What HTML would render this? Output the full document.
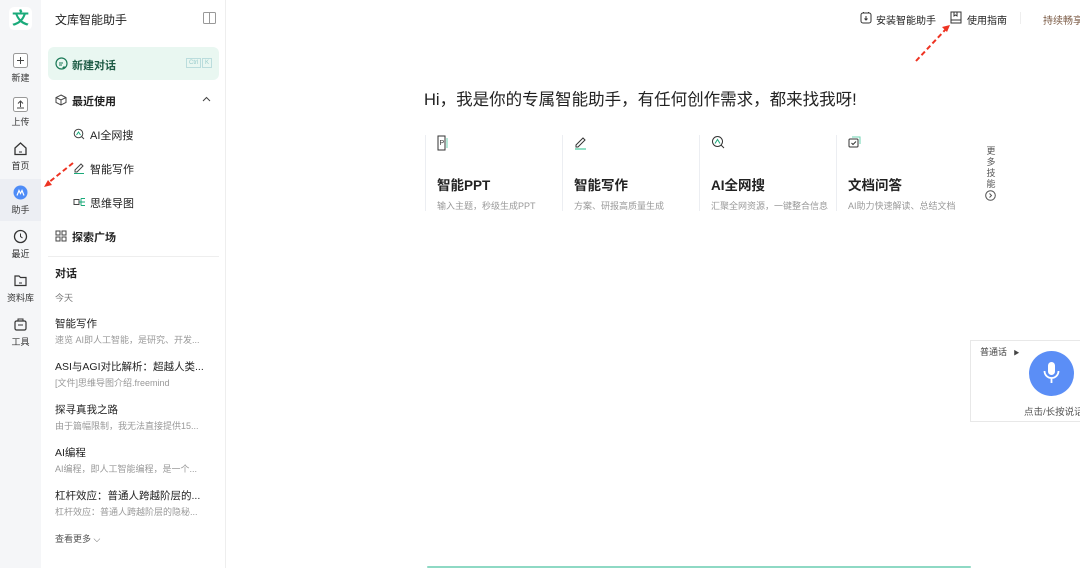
<!DOCTYPE html>
<html><head><meta charset="utf-8"><style>
*{margin:0;padding:0;box-sizing:border-box}
body{width:1080px;height:568px;overflow:hidden;background:#fff;font-family:"Liberation Sans","Noto Sans CJK SC",sans-serif;color:#222;position:relative}
.a{position:absolute}
.rail{left:0;top:0;width:41px;height:568px;background:#f5f6f8}
.ri{position:absolute;left:0;width:41px;text-align:center;font-size:9px;color:#333}
.ri svg{display:block;margin:0 auto 3px}
.side{left:41px;top:0;width:185px;height:568px;border-right:1px solid #eee;background:#fff}
.t{font-size:11px;color:#222;white-space:nowrap}
.s{font-size:9px;color:#999;white-space:nowrap}
.card{position:absolute;top:135px;height:76px;border-left:1px solid #eceef2;padding-left:11px}
.card h3{font-size:13.5px;font-weight:bold;color:#222;position:absolute;top:39px;left:11px;white-space:nowrap}
.card p{font-size:9px;color:#999;position:absolute;top:64px;left:11px;white-space:nowrap}
.card svg{position:absolute;left:11px;top:0}
</style></head><body>
<div class="a rail"></div>
<div class="a" style="left:9px;top:7px;width:23px;height:23px;background:#fff;border-radius:5px;text-align:center;font-size:17px;font-weight:bold;color:#1aaa7a;line-height:23px">文</div>
<div class="ri" style="top:53px"><svg width="15" height="15"><rect x=".5" y=".5" width="14" height="14" rx="2" fill="#fff" stroke="#999"/><path d="M7.5 4v7M4 7.5h7" stroke="#444"/></svg>新建</div>
<div class="ri" style="top:97px"><svg width="15" height="15"><rect x=".5" y=".5" width="14" height="14" rx="2" fill="#fff" stroke="#999"/><path d="M7.5 4v6M5 6.5l2.5-2.5 2.5 2.5M4 11h7" stroke="#444" fill="none"/></svg>上传</div>
<div class="ri" style="top:141px"><svg width="15" height="15"><path d="M2 7l5.5-5 5.5 5v6.5h-11z" fill="none" stroke="#333" stroke-width="1.3"/><path d="M6 11h3" stroke="#333"/></svg>首页</div>
<div class="a" style="left:0;top:179px;width:41px;height:42px;background:#eceef3"></div>
<div class="ri" style="top:185px"><svg width="15" height="15"><circle cx="7.5" cy="7.5" r="7" fill="#4e8cf7"/><path d="M4 10.5l2-5 1.5 3 1.5-3 2 5" stroke="#fff" fill="none" stroke-width="1.2"/></svg>助手</div>
<div class="ri" style="top:229px"><svg width="15" height="15"><circle cx="7.5" cy="7.5" r="6" fill="none" stroke="#333" stroke-width="1.3"/><path d="M7.5 4.5v3l2 1.5" stroke="#333" fill="none"/></svg>最近</div>
<div class="ri" style="top:273px"><svg width="15" height="15"><path d="M2 3h4l1.5 1.5H13v8H2z" fill="none" stroke="#333" stroke-width="1.2"/><path d="M6 10h3" stroke="#333"/></svg>资料库</div>
<div class="ri" style="top:317px"><svg width="15" height="15"><rect x="2" y="4" width="11" height="9" rx="1.5" fill="none" stroke="#333" stroke-width="1.2"/><path d="M5 4V2h5v2M5 8h5" stroke="#333" fill="none"/></svg>工具</div>

<div class="a side"></div>
<div class="a t" style="left:55px;top:11px;font-size:12px">文库智能助手</div>
<svg class="a" style="left:203px;top:12px" width="13" height="12"><rect x=".5" y=".5" width="12" height="11" rx="1" fill="none" stroke="#999"/><path d="M6.5 1v10" stroke="#999"/></svg>
<div class="a" style="left:48px;top:47px;width:171px;height:33px;background:#e9f7f1;border-radius:6px"></div>
<svg class="a" style="left:55px;top:57px" width="13" height="13"><circle cx="6.5" cy="6.5" r="5.5" fill="none" stroke="#1c7a58" stroke-width="1.2"/><path d="M4 6h4M4 8h3M9 9v3M7.5 10.5h3" stroke="#1c7a58"/></svg>
<div class="a t" style="left:72px;top:57px;font-weight:bold;color:#1c5a44">新建对话</div>
<div class="a" style="left:186px;top:58px;font-size:6px;color:#9cc;border:1px solid #bdd;padding:0 2px;line-height:8px">Ctrl</div>
<div class="a" style="left:202px;top:58px;font-size:6px;color:#9cc;border:1px solid #bdd;padding:0 2px;line-height:8px">K</div>
<svg class="a" style="left:55px;top:94px" width="12" height="12"><path d="M6 1l5 2.5v5L6 11 1 8.5v-5zM1 3.5L6 6l5-2.5M6 6v5" fill="none" stroke="#444"/></svg>
<div class="a t" style="left:72px;top:93px;font-weight:bold">最近使用</div>
<svg class="a" style="left:202px;top:96px" width="9" height="6"><path d="M1 5l3.5-3.5L8 5" fill="none" stroke="#444"/></svg>
<svg class="a" style="left:73px;top:128px" width="12" height="12"><circle cx="5.5" cy="5.5" r="4.3" fill="none" stroke="#444"/><path d="M8.5 8.5l2.5 2.5" stroke="#444"/><path d="M3.5 7l2-3 2 3" stroke="#1aaa7a" fill="none"/></svg>
<div class="a t" style="left:90px;top:127px">AI全网搜</div>
<svg class="a" style="left:73px;top:162px" width="12" height="12"><path d="M2 8l6-6 2 2-6 6H2z" fill="none" stroke="#444"/><path d="M1 11.5h10" stroke="#1aaa7a"/></svg>
<div class="a t" style="left:90px;top:161px">智能写作</div>
<svg class="a" style="left:73px;top:196px" width="13" height="12"><rect x="1" y="3.5" width="5" height="5" fill="none" stroke="#444"/><path d="M6 6h2M8 2.5v7M8 2.5h4M8 6h4M8 9.5h4" stroke="#1aaa7a" fill="none"/></svg>
<div class="a t" style="left:90px;top:195px">思维导图</div>
<svg class="a" style="left:55px;top:230px" width="12" height="12"><g fill="none" stroke="#444"><rect x="1" y="1" width="4" height="4"/><rect x="7" y="1" width="4" height="4"/><rect x="1" y="7" width="4" height="4"/><rect x="7" y="7" width="4" height="4"/></g></svg>
<div class="a t" style="left:72px;top:229px;font-weight:bold">探索广场</div>
<div class="a" style="left:48px;top:256px;width:171px;height:1px;background:#eee"></div>
<div class="a t" style="left:55px;top:265px;font-weight:bold">对话</div>
<div class="a s" style="left:55px;top:291px;color:#777">今天</div>
<div class="a t" style="left:55px;top:316px;font-size:10.5px">智能写作</div>
<div class="a s" style="left:55px;top:333px">速览 AI即人工智能，是研究、开发...</div>
<div class="a t" style="left:55px;top:359px;font-size:10.5px">ASI与AGI对比解析：超越人类...</div>
<div class="a s" style="left:55px;top:376px">[文件]思维导图介绍.freemind</div>
<div class="a t" style="left:55px;top:402px;font-size:10.5px">探寻真我之路</div>
<div class="a s" style="left:55px;top:419px">由于篇幅限制，我无法直接提供15...</div>
<div class="a t" style="left:55px;top:445px;font-size:10.5px">AI编程</div>
<div class="a s" style="left:55px;top:462px">AI编程，即人工智能编程，是一个...</div>
<div class="a t" style="left:55px;top:488px;font-size:10.5px">杠杆效应：普通人跨越阶层的...</div>
<div class="a s" style="left:55px;top:505px">杠杆效应：普通人跨越阶层的隐秘...</div>
<div class="a s" style="left:55px;top:532px;color:#555">查看更多 ⌵</div>

<svg class="a" style="left:860px;top:11px" width="12" height="13"><rect x="1" y="2" width="10" height="10" rx="2" fill="none" stroke="#333"/><path d="M3.5 2V1M8.5 2V1M6 5v4M4.5 7.5L6 9l1.5-1.5" stroke="#333" fill="none"/></svg>
<div class="a t" style="left:876px;top:12px;font-size:10px">安装智能助手</div>
<svg class="a" style="left:950px;top:11px" width="12" height="13"><rect x="1" y="1" width="10" height="11" fill="none" stroke="#333"/><path d="M1 9h10M4 1v4l1.5-1 1.5 1V1" stroke="#333" fill="none"/></svg>
<div class="a t" style="left:967px;top:12px;font-size:10px">使用指南</div>
<div class="a" style="left:1020px;top:12px;width:1px;height:12px;background:#eee"></div>
<div class="a t" style="left:1043px;top:12px;font-size:10px;color:#7a5a44">持续畅享</div>

<div class="a" style="left:424px;top:86px;font-size:16.5px;color:#222;white-space:nowrap">Hi，我是你的专属智能助手，有任何创作需求，都来找我呀!</div>

<div class="card" style="left:425px;width:137px"><svg width="14" height="16"><path d="M1 1h7v14H1z" fill="none" stroke="#333"/><text x="2.5" y="10" font-size="7" font-family="Liberation Sans" fill="#333">P</text><path d="M10 3v10" stroke="#6cd3b0"/></svg><h3>智能PPT</h3><p>输入主题，秒级生成PPT</p></div>
<div class="card" style="left:562px;width:137px"><svg width="14" height="16"><path d="M2 10l7-7 2 2-7 7H2z" fill="none" stroke="#333"/><path d="M1 14h11" stroke="#6cd3b0" stroke-width="1.5"/></svg><h3>智能写作</h3><p>方案、研报高质量生成</p></div>
<div class="card" style="left:699px;width:137px"><svg width="14" height="16"><circle cx="6.5" cy="6.5" r="5" fill="none" stroke="#333"/><path d="M10 10l3 3" stroke="#333"/><path d="M4 8.5l2.5-4 2.5 4" stroke="#1aaa7a" fill="none"/></svg><h3>AI全网搜</h3><p>汇聚全网资源，一键整合信息</p></div>
<div class="card" style="left:836px;width:137px"><svg width="14" height="16"><rect x="1" y="4" width="9" height="8" rx="1" fill="none" stroke="#333"/><path d="M3.5 8l1.5 1.5 3-3" stroke="#333" fill="none"/><path d="M4 2h8v7" stroke="#6cd3b0" fill="none"/></svg><h3>文档问答</h3><p>AI助力快速解读、总结文档</p></div>
<div class="a" style="left:985px;top:146px;width:12px;font-size:9px;color:#555;line-height:11px;text-align:center">更<br>多<br>技<br>能</div>
<svg class="a" style="left:985px;top:190px" width="11" height="11"><circle cx="5.5" cy="5.5" r="4.8" fill="none" stroke="#555"/><path d="M4.5 3.5l2 2-2 2" stroke="#555" fill="none"/></svg>

<div class="a" style="left:970px;top:340px;width:120px;height:82px;border:1px solid #e8e8e8;background:#fff"></div>
<div class="a t" style="left:980px;top:345px;font-size:9px;color:#444">普通话 <span style="font-size:6px;margin-left:4px">▶</span></div>
<div class="a" style="left:1029px;top:351px;width:45px;height:45px;border-radius:50%;background:#5b8ef6"></div>
<svg class="a" style="left:1041px;top:361px" width="21" height="25"><rect x="7" y="1" width="7" height="13" rx="3.5" fill="#fff"/><path d="M3.5 10a7 7 0 0 0 14 0M10.5 17v5" stroke="#fff" stroke-width="1.8" fill="none"/></svg>
<div class="a t" style="left:1024px;top:404px;font-size:9.5px;color:#555">点击/长按说话</div>

<div class="a" style="left:427px;top:566px;width:544px;height:2px;background:#8ed9c4;border-radius:1px"></div>

<svg class="a" style="left:0;top:0" width="1080" height="568" pointer-events="none">
<path d="M73 163L48 183" stroke="#e32" stroke-width="2" stroke-dasharray="5 3"/><path d="M44 187l8-2-4-5z" fill="#e32"/>
<path d="M916 61l30-32" stroke="#e32" stroke-width="2" stroke-dasharray="5 3"/><path d="M950 25l-8 2 5 5z" fill="#e32"/>
</svg>
</body></html>
